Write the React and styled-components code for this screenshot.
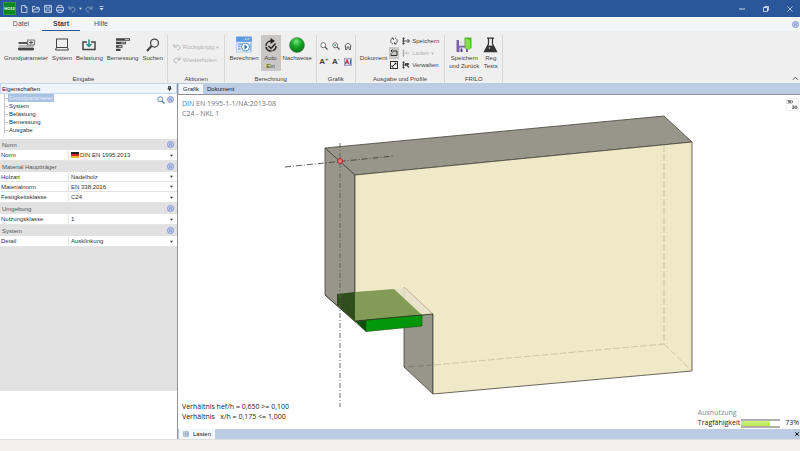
import React from "react";
import styled, { createGlobalStyle } from "styled-components";

const GlobalStyle = createGlobalStyle`
  * {
    box-sizing: border-box;
  }

  body {
    margin: 0;
    font-family: "Liberation Sans", Arial, sans-serif;
    font-size: 6px;
    line-height: 8px;
    color: #444;
  }

  button,
  select {
    margin: 0;
    padding: 0;
    border: 0;
    background: none;
    font: inherit;
    color: inherit;
  }

  svg {
    display: block;
    flex: none;
  }
`;

const Page = styled.div`
  display: flex;
  flex-direction: column;
  min-height: 100vh;
  background: #f1f0ef;
`;

const TitleBar = styled.header`
  display: flex;
  align-items: center;
  height: 17px;
  padding: 0 5px 0 3px;
  background: #2b579a;
  color: #d5e0f0;
`;

const Logo = styled.div`
  width: 13px;
  height: 13px;
  margin-right: 2px;
  border: 1px solid #2f9d3c;
  background: #0b8a22;
  color: #fff;
  font-size: 4px;
  font-weight: 700;
  line-height: 11px;
  text-align: center;
`;

const QuickButton = styled.button`
  display: flex;
  align-items: center;
  justify-content: center;
  width: ${props => (props.$narrow ? "5px" : "12px")};
  height: 16px;
  opacity: ${props => (props.$dim ? 0.5 : 1)};
`;

const WindowButtons = styled.div`
  display: flex;
  gap: 14px;
  margin-left: auto;
`;

const WindowButton = styled.button`
  display: flex;
  align-items: center;
  justify-content: center;
  width: 10px;
  height: 16px;
`;

const TabBar = styled.nav`
  display: flex;
  align-items: stretch;
  gap: 2px;
  height: 14px;
  padding: 0 1px 0 2px;
  background: #f4f5f7;
`;

const RibbonTab = styled.button`
  min-width: 38px;
  padding-top: 1px;
  border-bottom: 1px solid ${props => (props.$active ? "#2b579a" : "transparent")};
  color: ${props => (props.$active ? "#2d3f60" : "#555")};
  font-size: 7px;
  font-weight: ${props => (props.$active ? 700 : 400)};
`;

const HelpButton = styled.button`
  margin-left: auto;
`;

const Ribbon = styled.div`
  display: flex;
  height: 52px;
  padding-top: 4px;
  background: #efefef;
`;

const Group = styled.section`
  display: flex;
  flex-direction: column;
  padding: 0 ${props => (props.$tight ? 1 : 4)}px;
  border-right: 1px solid #d6d6d6;
`;

const GroupBody = styled.div`
  display: flex;
  flex: 1;
  align-items: flex-start;
  gap: ${props => props.$gap || 4}px;
`;

const GroupLabel = styled.div`
  text-align: center;
`;

const BigButton = styled.button`
  display: flex;
  flex-direction: column;
  align-items: center;
  padding: 0 ${props => (props.$pressed ? 3 : 0)}px 1px;
  background: ${props => (props.$pressed ? "#c9c7c6" : "transparent")};
  white-space: nowrap;
`;

const BigIcon = styled.span`
  display: flex;
  align-items: center;
  justify-content: center;
  height: 19px;
`;

const Stack = styled.div`
  display: flex;
  flex-direction: column;
  gap: ${props => props.$gap || 0}px;
  padding-top: ${props => props.$top || 0}px;
`;

const SmallButton = styled.button`
  display: flex;
  align-items: center;
  gap: 2px;
  height: 12px;
  padding: 0 1px;
  background: ${props => (props.$pressed ? "#cbcac9" : "transparent")};
  color: ${props => (props.$dim ? "#b3b3b3" : "inherit")};
  white-space: nowrap;
`;

const IconGrid = styled.div`
  display: grid;
  grid-template-columns: repeat(3, 12px);
  grid-auto-rows: 16px;
  padding-top: 3px;
`;

const IconButton = styled.button`
  display: flex;
  align-items: center;
  justify-content: center;
`;

const Letter = styled.span`
  font-size: 8px;
  font-weight: 700;
`;

const Sign = styled.span`
  align-self: flex-start;
  padding-top: 1px;
`;

const Collapse = styled.button`
  align-self: flex-end;
  margin: 0 1px 1px auto;
`;

const Workspace = styled.main`
  display: flex;
  flex: 1;
`;

const Sidebar = styled.aside`
  display: flex;
  flex-direction: column;
  width: 178px;
  flex: none;
  border-right: 1px solid #929292;
  background: #fff;
`;

const SidebarTitle = styled.h2`
  display: flex;
  align-items: center;
  justify-content: space-between;
  height: 11px;
  margin: 0;
  padding: 0 4px 0 1px;
  border: 1px solid #c5d9ee;
  background: #eff5fb;
  color: #222;
  font-size: 6px;
  font-weight: 400;
`;

const TreeArea = styled.div`
  display: flex;
  align-items: flex-start;
  height: 45px;
  padding: 0 3px 0 4px;
`;

const Tree = styled.ul`
  margin: 0;
  padding: 0;
  border-left: 1px solid #c4c4c4;
  list-style: none;
`;

const TreeItem = styled.li`
  display: flex;
  align-items: center;
  height: 8px;
  color: #333;

  &::before {
    content: "";
    width: 3px;
    border-top: 1px solid #c4c4c4;
  }
`;

const TreeLink = styled.a`
  padding: 0 1px;
  background: ${props => (props.$active ? "#a9c1e2" : "transparent")};
  color: ${props => (props.$active ? "#e8f0fa" : "inherit")};
  line-height: 8px;
  text-decoration: none;
`;

const TreeTools = styled.div`
  display: flex;
  gap: 2px;
  margin: 2px 0 0 auto;
`;

const Properties = styled.div`
  flex: 1;
  background: #e1e1e1;
`;

const SectionTitle = styled.h3`
  display: flex;
  align-items: center;
  justify-content: space-between;
  height: 11px;
  margin: 0;
  padding: 0 3px 0 2px;
  background: #e1e1e1;
  color: #555;
  font-size: 6px;
  font-weight: 400;
`;

const PropertyRow = styled.div`
  display: flex;
  align-items: center;
  height: ${props => (props.$tall ? 11 : 10)}px;
  border-bottom: 1px solid #e4e4e4;
  background: #fff;
  color: #333;
`;

const PropertyLabel = styled.label`
  flex: 0 0 69px;
  padding-left: 1px;
  border-right: 1px solid #e4e4e4;
`;

const PropertyValue = styled.div`
  display: flex;
  flex: 1;
  align-items: center;
  gap: 1px;
  padding: 0 4px 0 2px;
`;

const PropertySelect = styled.select`
  flex: 1;
  height: 9px;
  appearance: none;
`;

const Notes = styled.div`
  height: 48px;
`;

const Content = styled.div`
  display: flex;
  flex: 1;
  flex-direction: column;
  min-width: 0;
`;

const DocTabs = styled.div`
  display: flex;
  align-items: flex-end;
  height: ${props => (props.$bottom ? 10 : 12)}px;
  padding: 0 1px;
  border-bottom: ${props => (props.$bottom ? "0" : "1px solid #929292")};
  background: #bccce5;
`;

const DocTab = styled.button`
  display: flex;
  align-items: center;
  gap: 4px;
  height: 10px;
  padding: 0 4px;
  background: ${props => (props.$active ? "#f3f8fe" : "transparent")};
  color: #222;
`;

const CloseTab = styled.button`
  align-self: center;
  margin-left: auto;
  color: #111;
`;

const Canvas = styled.div`
  position: relative;
  flex: 1;
  background: #fff;
  font-family: "Open Sans", "Noto Sans", sans-serif;
  font-size: 7px;
  line-height: 10px;
`;

const Drawing = styled.svg`
  position: absolute;
  inset: 0;
  width: 100%;
  height: 100%;
`;

const Overlay = styled.div`
  position: absolute;
  color: ${props => props.$color};
  white-space: pre;
`;

const CanvasTitle = styled(Overlay)`
  top: 4px;
  left: 4px;
`;

const Ratios = styled(Overlay)`
  bottom: 7px;
  left: 4px;
`;

const Usage = styled(Overlay)`
  right: 1px;
  bottom: 1px;
`;

const UsageRow = styled.div`
  display: flex;
  align-items: center;
  color: #222;
`;

const Bar = styled.div`
  width: 39px;
  height: 9px;
  margin: 0 5px 0 1px;
  border-top: 2px solid #b0b0b0;
  border-bottom: 2px solid #b0b0b0;
`;

const BarFill = styled.div`
  height: 100%;
  background: linear-gradient(#d2f37b, #b9e552);
`;

const ViewSwitch = styled.button`
  position: absolute;
  top: 3px;
  right: 1px;
  width: 13px;
  height: 13px;
  border: 1px solid #ededed;
  border-radius: 2px;
`;

const StatusBar = styled.footer`
  height: 12px;
  border-top: 1px solid #dedede;
  background: #f1f0ef;
`;

// small helper for the line icons
const Icon = ({ w = 8, h = w, box = "0 0 16 16", children, ...rest }) => (
  <svg
    width={w}
    height={h}
    viewBox={box}
    fill="none"
    stroke="currentColor"
    strokeWidth="1.6"
    aria-hidden="true"
    {...rest}
  >
    {children}
  </svg>
);

const Caret = ({ size = 3 }) => (
  <Icon w={size} box="0 0 8 8" stroke="none">
    <path d="M0 2h8L4 7z" fill="currentColor" />
  </Icon>
);

const Undo = () => (
  <Icon>
    <path d="M2 2v6h6M2 8c3-5 12-5 12 1 0 3-3 5-6 5" strokeWidth="2" />
  </Icon>
);

const Redo = () => (
  <Icon>
    <path d="M14 2v6H8M14 8C11 3 2 3 2 9c0 3 3 5 6 5" strokeWidth="2" />
  </Icon>
);

const RoundUp = () => (
  <Icon w={7}>
    <circle cx="8" cy="8" r="7" fill="#c3cdf0" stroke="#8494cf" strokeWidth="2" />
    <path d="M4.500 8L8 5l3.500 3M4.500 11.500L8 8.500l3.500 3" stroke="#6d80c4" />
  </Icon>
);

const Magnifier = ({ w = 8, color = "#555", inner }) => (
  <Icon w={w} stroke={color}>
    <circle cx="6.500" cy="6.500" r="5" fill="#fff" />
    <path d="M10 10l5 5" strokeWidth="2.200" />
    {inner && <path d="M4 6.500h5M6.500 4v5" stroke="#3e9b72" />}
  </Icon>
);

const InputIcon = () => (
  <Icon w={17} h={12} box="0 0 34 24">
    <path d="M1 8h19" stroke="#555" strokeWidth="4" />
    <path d="M1 14h30" stroke="#aaa" strokeWidth="3" />
    <path d="M1 18h30v4H1z" fill="#444" stroke="#444" />
    <rect x="19" y="2" width="14" height="10" fill="#ddd" stroke="#666" />
    <path d="M22 7h8M26 4v6" stroke="#555" strokeWidth="2" />
  </Icon>
);

const SystemIcon = () => (
  <Icon w={14} h={13} box="0 0 28 26">
    <rect x="3" y="2" width="22" height="17" strokeWidth="2" />
    <path d="M3 19l-2 5h26l-2-5" strokeWidth="2" />
  </Icon>
);

const LoadIcon = () => (
  <Icon w={14} h={12} box="0 0 28 24">
    <path d="M10 6H2v15h24V6h-8" strokeWidth="3" />
    <path d="M14 1v13M9 10l5 5 5-5" stroke="#278a87" strokeWidth="3" />
  </Icon>
);

const DesignIcon = () => (
  <Icon w={16} h={13} box="0 0 32 26">
    <path d="M2 3h28M2 10h20M2 17h13M2 24h9" strokeWidth="5" />
    <path d="M12 10h8M8 17h5M20 3h8" stroke="#bbb" strokeWidth="2" />
  </Icon>
);

const SearchIcon = () => (
  <Icon w={14} box="0 0 28 28">
    <circle cx="17" cy="10" r="8" strokeWidth="2.500" />
    <path d="M11 16L2 26" strokeWidth="4" />
  </Icon>
);

const CalcIcon = () => (
  <Icon w={16} h={17} box="0 0 32 34">
    <rect x="1" y="2" width="30" height="30" fill="#e5eefb" stroke="#a8c2e8" />
    <path d="M1 2h30v9H1z" fill="#5f9be0" stroke="#5f9be0" />
    <path d="M18 8l3-4M23 8l4-4" stroke="#fff" />
    <path d="M4 16h9M4 21h5M4 26h5" stroke="#7fa6dc" strokeWidth="3" />
    <circle cx="19" cy="22" r="8" fill="#fff" stroke="#4b8fbd" strokeWidth="2" />
    <path d="M17 17l6 5-6 5z" fill="#276f9d" stroke="none" />
    <path d="M29 14v16" stroke="#7fa6dc" />
  </Icon>
);

const AutoIcon = () => (
  <Icon w={14} h={16} box="0 0 28 32" stroke="#222">
    <path d="M14 8A10 10 0 1 0 24 18" strokeWidth="3" strokeDasharray="15 2" />
    <path d="M13 2l9 6-9 6z" fill="#222" stroke="none" />
    <path d="M9 18l5 5 9-10" strokeWidth="3" />
  </Icon>
);

const GreenBall = () => (
  <svg width="16" height="16" viewBox="0 0 32 32" aria-hidden="true">
    <defs>
      <radialGradient id="ball" cx="45%" cy="28%" r="70%">
        <stop offset="0" stopColor="#79e77d" />
        <stop offset="0.45" stopColor="#19aa28" />
        <stop offset="1" stopColor="#087316" />
      </radialGradient>
    </defs>
    <circle cx="16" cy="16" r="15" fill="url(#ball)" stroke="#497d4e" />
  </svg>
);

const HomeIcon = () => (
  <Icon>
    <path d="M1 8l7-6 7 6M3 7v8h3v-5h4v5h3V7" />
  </Icon>
);

const ImageIcon = () => (
  <Icon w={8}>
    <rect x="1" y="1" width="14" height="14" fill="#d9dff2" stroke="#8b95b7" />
    <path d="M2 13L6 3l4 10M3.500 9.500h5" stroke="#b32937" strokeWidth="2" />
    <path d="M13 3v10" stroke="#4165a8" strokeWidth="2" />
  </Icon>
);

const RefreshIcon = () => (
  <Icon>
    <path d="M6 2C0 4 0 12 6 14M10 2c6 2 6 10 0 12M3 2h4v4M13 14H9v-4" />
  </Icon>
);

const PageLoopIcon = () => (
  <Icon>
    <path d="M6 4h8v9H2V9M2 4h3M5 1L2 4l3 3" stroke="#333" strokeWidth="2" />
  </Icon>
);

const ExpandIcon = () => (
  <Icon stroke="#333">
    <rect x="1" y="1" width="14" height="14" strokeWidth="2" />
    <path d="M9 4h3v3M12 4L8 8M7 12H4V9M4 12l4-4" strokeWidth="2" />
  </Icon>
);

const ProfileIcon = ({ kind }) => (
  <Icon>
    <path d="M3 1v14" strokeWidth="2" />
    <path d="M1 3h4M1 8h4M1 13h4" strokeWidth="3" />
    {kind === "save" && <path d="M6 8h8M11 4l4 4-4 4" strokeWidth="2" />}
    {kind === "load" && <path d="M7 8h8M10 5L7 8l3 3" />}
    {kind === "edit" && (
      <path d="M7 5l7 8M7 5h5M7 5v5M11 8l3-3" strokeWidth="2.500" />
    )}
  </Icon>
);

const SaveBackIcon = () => (
  <svg width="16" height="16" viewBox="0 0 32 32" aria-hidden="true">
    <path d="M1 6h5v11h13V6h5v24H1z" fill="#7862aa" />
    <path d="M6 7h13v10H6z" fill="#e8e6ef" />
    <path d="M7 21h13v9H7z" fill="#eee" />
    <path d="M9 23h4v7H9z" fill="#59458b" />
    <path d="M17 1h14v22H17z" fill="#50b72e" />
    <path d="M19 3l9 3v20l-9-4z" fill="#82df4b" />
  </svg>
);

const FlaskIcon = () => (
  <Icon w={15} h={16} box="0 0 30 32" stroke="#333">
    <path d="M8 2h14M11 3v11L3 29h24l-8-15V3" strokeWidth="2.500" />
    <path d="M9 18h12l5 11H4z" fill="#333" />
    <circle cx="13" cy="22" r="1.500" fill="#eee" stroke="none" />
  </Icon>
);

const Flag = () => (
  <svg width="8" height="6" viewBox="0 0 8 6" aria-hidden="true">
    <path d="M0 0h8v2H0z" fill="#222" />
    <path d="M0 2h8v2H0z" fill="#d8202a" />
    <path d="M0 4h8v2H0z" fill="#f2bd27" />
  </svg>
);

const sections = [
  {
    title: "Norm",
    rows: [{ label: "Norm", value: "DIN EN 1995:2013", flag: true, tall: true }]
  },
  {
    title: "Material Hauptträger",
    rows: [
      { label: "Holzart", value: "Nadelholz" },
      { label: "Materialnorm", value: "EN 338:2016" },
      { label: "Festigkeitsklasse", value: "C24", tall: true }
    ]
  },
  { title: "Umgebung", rows: [{ label: "Nutzungsklasse", value: "1", tall: true }] },
  { title: "System", rows: [{ label: "Detail", value: "Ausklinkung", tall: true }] }
];

const tree = ["Grundparameter", "System", "Belastung", "Bemessung", "Ausgabe"];

const Big = ({ icon, lines, pressed }) => (
  <BigButton $pressed={pressed}>
    <BigIcon>{icon}</BigIcon>
    {lines.map(line => <span key={line}>{line}</span>)}
  </BigButton>
);

const PropertySection = ({ title, rows }) => (
  <section>
    <SectionTitle>
      {title}
      <RoundUp />
    </SectionTitle>
    {rows.map(row => (
      <PropertyRow key={row.label} $tall={row.tall}>
        <PropertyLabel htmlFor={`field-${row.label}`}>{row.label}</PropertyLabel>
        <PropertyValue>
          {row.flag && <Flag />}
          <PropertySelect id={`field-${row.label}`}>
            <option>{row.value}</option>
          </PropertySelect>
          <Caret />
        </PropertyValue>
      </PropertyRow>
    ))}
  </section>
);

const BeamDrawing = () => (
  <Drawing viewBox="178 95 622 334" role="img" aria-label="Ausklinkung 3D">
    <g stroke="#45433b" strokeWidth="0.8" strokeLinejoin="round">
      <path d="M325 148L664 116L692 142L355 175Z" fill="#98968a" />
      <path d="M325 148L355 175V321L325 295Z" fill="#98968a" />
      <path d="M404 287L433 314V394L404 367Z" fill="#98968a" />
      <path
        d="M355 175L692 142V371L433 394V314L355 321Z"
        fill="#efe9c7"
      />
    </g>
    <path d="M394 289L404 287L433 314L422 315Z" fill="#e8e3c9" />
    <path d="M404 287L433 314" stroke="#b9967d" strokeWidth="0.7" />
    <path d="M404 287V316" stroke="#d2bda0" strokeWidth="0.5" />
    <path d="M355 292L394 289L422 315L355 321Z" fill="#829b56" />
    <path d="M337 294L355 292V321L337 305Z" fill="#304e1b" />
    <path d="M355 321L366 320V331.500Z" fill="#07510a" />
    <path
      d="M366 320L422 315V326L366 331.500Z"
      fill="#00980a"
      stroke="#165b14"
      strokeWidth="0.7"
    />
    <path d="M325 295L366 331.500M355 321L433 314" fill="none" stroke="#353b25" strokeWidth="0.8" />
    <g fill="none" stroke="#b5b095" strokeWidth="0.6" strokeDasharray="7 2">
      <path d="M664 145V344L433 365M664 344L692 371" />
      <path d="M433 365L404 367" stroke="#706e66" />
    </g>
    <path
      d="M340 143V407"
      stroke="#5c5c5c"
      strokeWidth="0.9"
      strokeDasharray="5 2 1 2"
    />
    <path
      d="M285 167L394 156"
      stroke="#333"
      strokeWidth="0.8"
      strokeDasharray="6 2 1 2"
    />
    <circle cx="340" cy="161" r="2.500" fill="#ed7777" stroke="#b32626" />
  </Drawing>
);

const App = () => (
  <Page>
    <GlobalStyle />
    <TitleBar>
      <Logo>HO12</Logo>
      <QuickButton aria-label="Neu">
        <Icon><path d="M3 1h7l4 4v10H3zM10 1v4h4" /></Icon>
      </QuickButton>
      <QuickButton aria-label="Öffnen">
        <Icon><path d="M1 14V3h5l2 2h6v3M1 14l3-6h12l-3 6z" /></Icon>
      </QuickButton>
      <QuickButton aria-label="Speichern">
        <Icon><path d="M1 1h14v14H1zM4 1v5h8V1M4 15v-5h8v5" /></Icon>
      </QuickButton>
      <QuickButton aria-label="Drucken">
        <Icon>
          <path d="M4 5V1h8v4M1 5h14v7H1z" />
          <path d="M4 10h8v5H4z" fill="#2b579a" />
        </Icon>
      </QuickButton>
      <QuickButton aria-label="Rückgängig" $dim><Undo /></QuickButton>
      <QuickButton aria-label="Liste" $narrow><Caret /></QuickButton>
      <QuickButton aria-label="Wiederholen" $dim><Redo /></QuickButton>
      <QuickButton aria-label="Anpassen">
        <Icon w={5} box="0 0 10 10">
          <path d="M1 1h8" />
          <path d="M1 4h8L5 9z" fill="currentColor" stroke="none" />
        </Icon>
      </QuickButton>
      <WindowButtons>
        <WindowButton aria-label="Minimieren">
          <Icon w={6}><path d="M0 8h16" strokeWidth="2.500" /></Icon>
        </WindowButton>
        <WindowButton aria-label="Wiederherstellen">
          <Icon w={6}><path d="M1 4h11v11H1zM5 4V1h10v10h-3" strokeWidth="2.500" /></Icon>
        </WindowButton>
        <WindowButton aria-label="Schließen">
          <Icon w={6}><path d="M1 1l14 14M15 1L1 15" strokeWidth="2" /></Icon>
        </WindowButton>
      </WindowButtons>
    </TitleBar>

    <TabBar>
      <RibbonTab>Datei</RibbonTab>
      <RibbonTab $active>Start</RibbonTab>
      <RibbonTab>Hilfe</RibbonTab>
      <HelpButton aria-label="Hilfe"><RoundUp /></HelpButton>
    </TabBar>

    <Ribbon>
      <Group>
        <GroupBody>
          <Big icon={<InputIcon />} lines={["Grundparameter"]} />
          <Big icon={<SystemIcon />} lines={["System"]} />
          <Big icon={<LoadIcon />} lines={["Belastung"]} />
          <Big icon={<DesignIcon />} lines={["Bemessung"]} />
          <Big icon={<SearchIcon />} lines={["Suchen"]} />
        </GroupBody>
        <GroupLabel>Eingabe</GroupLabel>
      </Group>
      <Group>
        <GroupBody>
          <Stack $top={6} $gap={1}>
            <SmallButton $dim><Undo /> Rückgängig <Caret /></SmallButton>
            <SmallButton $dim><Redo /> Wiederholen</SmallButton>
          </Stack>
        </GroupBody>
        <GroupLabel>Aktionen</GroupLabel>
      </Group>
      <Group>
        <GroupBody $gap={2}>
          <Big icon={<CalcIcon />} lines={["Berechnen"]} />
          <Big icon={<AutoIcon />} lines={["Auto", "Ein"]} pressed />
          <Big icon={<GreenBall />} lines={["Nachweise"]} />
        </GroupBody>
        <GroupLabel>Berechnung</GroupLabel>
      </Group>
      <Group $tight>
        <GroupBody>
          <IconGrid>
            <IconButton aria-label="Zoom"><Magnifier /></IconButton>
            <IconButton aria-label="Zoom Fenster"><Magnifier inner /></IconButton>
            <IconButton aria-label="Ansicht zurücksetzen"><HomeIcon /></IconButton>
            <IconButton aria-label="Schrift größer"><Letter>A</Letter><Sign>+</Sign></IconButton>
            <IconButton aria-label="Schrift kleiner"><Letter>A</Letter><Sign>-</Sign></IconButton>
            <IconButton aria-label="Beschriftung"><ImageIcon /></IconButton>
          </IconGrid>
        </GroupBody>
        <GroupLabel>Grafik</GroupLabel>
      </Group>
      <Group>
        <GroupBody $gap={2}>
          <Big lines={["Dokument"]} />
          <Stack>
            <SmallButton aria-label="Aktualisieren"><RefreshIcon /></SmallButton>
            <SmallButton aria-label="Automatisch" $pressed><PageLoopIcon /></SmallButton>
            <SmallButton aria-label="Vergrößern"><ExpandIcon /></SmallButton>
          </Stack>
          <Stack>
            <SmallButton><ProfileIcon kind="save" /> Speichern</SmallButton>
            <SmallButton $dim><ProfileIcon kind="load" /> Laden <Caret /></SmallButton>
            <SmallButton><ProfileIcon kind="edit" /> Verwalten</SmallButton>
          </Stack>
        </GroupBody>
        <GroupLabel>Ausgabe und Profile</GroupLabel>
      </Group>
      <Group>
        <GroupBody>
          <Big icon={<SaveBackIcon />} lines={["Speichern", "und Zurück"]} />
          <Big icon={<FlaskIcon />} lines={["Reg", "Tests"]} />
        </GroupBody>
        <GroupLabel>FRILO</GroupLabel>
      </Group>
      <Collapse aria-label="Menüband reduzieren">
        <Icon w={7}><path d="M2 11l6-6 6 6" strokeWidth="2" /></Icon>
      </Collapse>
    </Ribbon>

    <Workspace>
      <Sidebar>
        <SidebarTitle>
          Eigenschaften
          <Icon w={5} box="0 0 10 10" stroke="#222">
            <path d="M3 1h4v5H3zM1 6h8M5 6v4M6 1v5" />
          </Icon>
        </SidebarTitle>
        <TreeArea>
          <Tree>
            {tree.map((item, i) => (
              <TreeItem key={item}>
                <TreeLink href="#" $active={i === 0}>{item}</TreeLink>
              </TreeItem>
            ))}
          </Tree>
          <TreeTools>
            <Magnifier color="#3f74ad" />
            <RoundUp />
          </TreeTools>
        </TreeArea>
        <Properties>
          {sections.map(section => (
            <PropertySection key={section.title} {...section} />
          ))}
        </Properties>
        <Notes />
      </Sidebar>

      <Content>
        <DocTabs>
          <DocTab $active>Grafik</DocTab>
          <DocTab>Dokument</DocTab>
        </DocTabs>
        <Canvas>
          <BeamDrawing />
          <CanvasTitle $color="#777">{"DIN EN 1995-1-1/NA:2013-08\nC24 - NKL 1"}</CanvasTitle>
          <ViewSwitch aria-label="2D/3D">
            <Icon w={11} box="0 0 22 22" stroke="#777">
              <path
                d="M1 3h4v5H1M2 5h3M7 3v5h2l2-1V4L9 3zM10 14h4v5h-4M11 16h3M16 14v5h2l2-1v-3l-2-1z"
                strokeWidth="2"
              />
            </Icon>
          </ViewSwitch>
          <Ratios $color="#222">
            {"Verhältnis hef/h = 0,650 >= 0,100\nVerhältnis   x/h = 0,175 <= 1,000"}
          </Ratios>
          <Usage $color="#888">
            Ausnutzung
            <UsageRow>
              Tragfähigkeit
              <Bar role="progressbar" aria-label="Tragfähigkeit" aria-valuenow={73}>
                <BarFill style={{ width: "73%" }} />
              </Bar>
              73%
            </UsageRow>
          </Usage>
        </Canvas>
        <DocTabs $bottom>
          <DocTab $active>
            <Icon w={6} stroke="#7994b8">
              <path d="M1 2h14v12H1zM1 6h14M6 2v12M11 2v12M1 10h14" />
            </Icon>
            Lasten
          </DocTab>
          <CloseTab aria-label="Lasten schließen">
            <Icon w={4}><path d="M1 1l14 14M15 1L1 15" strokeWidth="4" /></Icon>
          </CloseTab>
        </DocTabs>
      </Content>
    </Workspace>
    <StatusBar />
  </Page>
);

export default App;
